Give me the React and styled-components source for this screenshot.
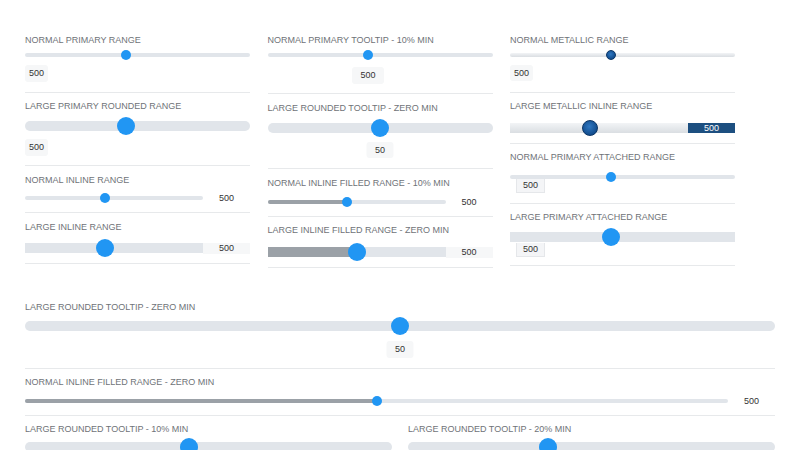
import React from "react";
import styled, { createGlobalStyle, css } from "styled-components";

const GlobalStyle = createGlobalStyle`
  html, body {
    margin: 0;
    padding: 0;
    background: #fff;
  }
  body {
    font-family: "Liberation Sans", Arial, sans-serif;
  }
`;

const Page = styled.div`
  width: 800px;
  height: 450px;
  overflow: hidden;
  box-sizing: border-box;
  padding: 26px 25px 0;
`;

const Columns = styled.div`
  display: grid;
  grid-template-columns: repeat(3, 225px);
  column-gap: 17.5px;
  align-items: start;
`;

const Column = styled.div`
  display: flex;
  flex-direction: column;
`;

const Wide = styled.div`
  margin-top: 25px;
`;

const Pair = styled.div`
  display: grid;
  grid-template-columns: 1fr 1fr;
  column-gap: 16px;
`;

const Item = styled.div`
  padding: ${(p) => p.$pt}px 0 ${(p) => p.$pb}px;
  border-bottom: ${(p) => (p.$last ? "none" : "1px solid #e7e9eb")};
`;

const Label = styled.div`
  font-size: 9px;
  line-height: 11px;
  color: #6f7378;
  white-space: nowrap;
  margin-bottom: ${(p) => p.$gap}px;
`;

const Row = styled.div`
  display: flex;
  align-items: center;
`;

const SliderBox = styled.div`
  position: relative;
  flex: 1;
  height: ${(p) => p.$h}px;
  display: flex;
  align-items: center;
`;

const Rail = styled.div`
  width: 100%;
  height: ${(p) => p.$h}px;
  background: #e1e5ea;
  border-radius: ${(p) => (p.$rounded ? p.$h / 2 : p.$h > 5 ? 0 : 2)}px;
  overflow: hidden;
  ${(p) =>
    p.$metallic &&
    css`
      background: linear-gradient(#f2f4f6, #dadee2);
    `}
`;

const Fill = styled.div`
  height: 100%;
  background: #9ba1a7;
`;

const Thumb = styled.div`
  position: absolute;
  top: 50%;
  width: ${(p) => p.$size}px;
  height: ${(p) => p.$size}px;
  border-radius: 50%;
  background: #2196f3;
  transform: translate(-50%, -50%);
  box-sizing: border-box;
  ${(p) =>
    p.$metallic &&
    css`
      background: radial-gradient(circle at 45% 40%, #2f78c2, #124d8e 70%);
      border: 1px solid #0b3565;
    `}
`;

const ValueBox = styled.div`
  width: max-content;
  margin-top: ${(p) => p.$gap}px;
  height: ${(p) => p.$h}px;
  line-height: ${(p) => p.$h}px;
  padding: 0 4px;
  background: #f6f7f8;
  border-radius: 3px;
  font-size: 9px;
  color: #333;
`;

const BubbleRow = styled.div`
  position: relative;
  margin-top: ${(p) => p.$gap}px;
  height: ${(p) => p.$h}px;
`;

const Bubble = styled.div`
  position: absolute;
  top: 0;
  transform: translateX(-50%);
  height: ${(p) => p.$h}px;
  line-height: ${(p) => p.$h}px;
  padding: 0 8.5px;
  background: #f6f7f8;
  border-radius: 3px;
  font-size: 9px;
  color: #333;
`;

const InlineValue = styled.div`
  width: 47px;
  flex: none;
  text-align: center;
  font-size: 9px;
  color: #333;
  height: ${(p) => p.$h}px;
  line-height: ${(p) => p.$h}px;
  ${(p) =>
    p.$boxed &&
    css`
      background: #f6f7f8;
    `}
  ${(p) =>
    p.$metallic &&
    css`
      background: #1d4f80;
      color: #fff;
    `}
`;

const Attached = styled.div`
  width: max-content;
  margin: -3px 0 0 6px;
  height: 13px;
  line-height: 13px;
  padding: 0 6px;
  background: #f4f5f7;
  border: 1px solid #e5e7ea;
  border-top: none;
  font-size: 9px;
  color: #333;
`;

const SIZES = {
  normal: { track: 4, thumb: 10 },
  large: { track: 10, thumb: 18 },
};

const at = (t, p) => `calc(${t / 2}px + ${p} * (100% - ${t}px))`;

function Slider({ size, value, min, max, rounded, filled, metallic }) {
  const s = SIZES[size];
  const thumb = metallic && size === "large" ? 16 : s.thumb;
  const p = (value - min) / (max - min);
  return (
    <SliderBox $h={Math.max(thumb, s.track)}>
      <Rail $h={s.track} $rounded={rounded} $metallic={metallic}>
        {filled && <Fill style={{ width: at(thumb, p) }} />}
      </Rail>
      <Thumb $size={thumb} $metallic={metallic} style={{ left: at(thumb, p) }} />
    </SliderBox>
  );
}

function Range(props) {
  const {
    label,
    size = "normal",
    value = 500,
    min = 100,
    max = 1000,
    mode,
    pt = 9,
    pb = 9,
    gap = 4,
    gap2 = 5,
    vh = 17,
    boxed,
    last,
  } = props;
  const s = SIZES[size];
  const thumb = props.metallic && size === "large" ? 16 : s.thumb;
  const p = (value - min) / (max - min);
  const slider = <Slider {...props} size={size} value={value} min={min} max={max} />;

  return (
    <Item $pt={pt} $pb={pb} $last={last}>
      <Label $gap={gap}>{label}</Label>
      {mode === "inline" ? (
        <Row>
          {slider}
          <InlineValue $h={boxed ? s.track + 1 : 10} $boxed={boxed} $metallic={props.metallic}>
            {value}
          </InlineValue>
        </Row>
      ) : (
        slider
      )}
      {mode === "below" && (
        <ValueBox $gap={gap2} $h={vh}>
          {value}
        </ValueBox>
      )}
      {mode === "tooltip" && (
        <BubbleRow $gap={gap2} $h={vh}>
          <Bubble $h={vh} style={{ left: at(thumb, p) }}>
            {value}
          </Bubble>
        </BubbleRow>
      )}
      {mode === "attached" && <Attached>{value}</Attached>}
    </Item>
  );
}

export default function App() {
  return (
    <Page>
      <GlobalStyle />
      <Columns>
        <Column>
          <Range label="NORMAL PRIMARY RANGE" mode="below" pb={10} />
          <Range label="LARGE PRIMARY ROUNDED RANGE" size="large" rounded mode="below" pt={8} gap={5} gap2={4} />
          <Range label="NORMAL INLINE RANGE" mode="inline" gap={7} />
          <Range label="LARGE INLINE RANGE" size="large" mode="inline" boxed gap={6} pb={6} />
        </Column>
        <Column>
          <Range label="NORMAL PRIMARY TOOLTIP - 10% MIN" mode="tooltip" gap2={7} />
          <Range
            label="LARGE ROUNDED TOOLTIP - ZERO MIN"
            size="large"
            rounded
            mode="tooltip"
            value={50}
            min={0}
            max={100}
            gap={5}
            gap2={5}
            vh={16}
            pb={10}
          />
          <Range label="NORMAL INLINE FILLED RANGE - 10% MIN" filled mode="inline" gap={8} />
          <Range
            label="LARGE INLINE FILLED RANGE - ZERO MIN"
            size="large"
            filled
            mode="inline"
            boxed
            min={0}
            pt={8}
            gap={7}
            pb={6}
          />
        </Column>
        <Column>
          <Range label="NORMAL METALLIC RANGE" metallic mode="below" vh={16} pb={11} />
          <Range label="LARGE METALLIC INLINE RANGE" size="large" metallic mode="inline" pt={8} gap={8} pb={7} />
          <Range label="NORMAL PRIMARY ATTACHED RANGE" mode="attached" pt={8} gap={9} pb={10} />
          <Range label="LARGE PRIMARY ATTACHED RANGE" size="large" mode="attached" pt={8} gap={5} pb={8} />
        </Column>
      </Columns>
      <Wide>
        <Range
          label="LARGE ROUNDED TOOLTIP - ZERO MIN"
          size="large"
          rounded
          mode="tooltip"
          value={50}
          min={0}
          max={100}
          gap2={6}
          pb={10}
        />
        <Range label="NORMAL INLINE FILLED RANGE - ZERO MIN" filled mode="inline" min={0} pt={8} gap={8} />
        <Pair>
          <Range
            label="LARGE ROUNDED TOOLTIP - 10% MIN"
            size="large"
            rounded
            mode="tooltip"
            value={50}
            min={10}
            max={100}
            pt={8}
            gap={3}
            last
          />
          <Range
            label="LARGE ROUNDED TOOLTIP - 20% MIN"
            size="large"
            rounded
            mode="tooltip"
            value={50}
            min={20}
            max={100}
            pt={8}
            gap={3}
            last
          />
        </Pair>
      </Wide>
    </Page>
  );
}
